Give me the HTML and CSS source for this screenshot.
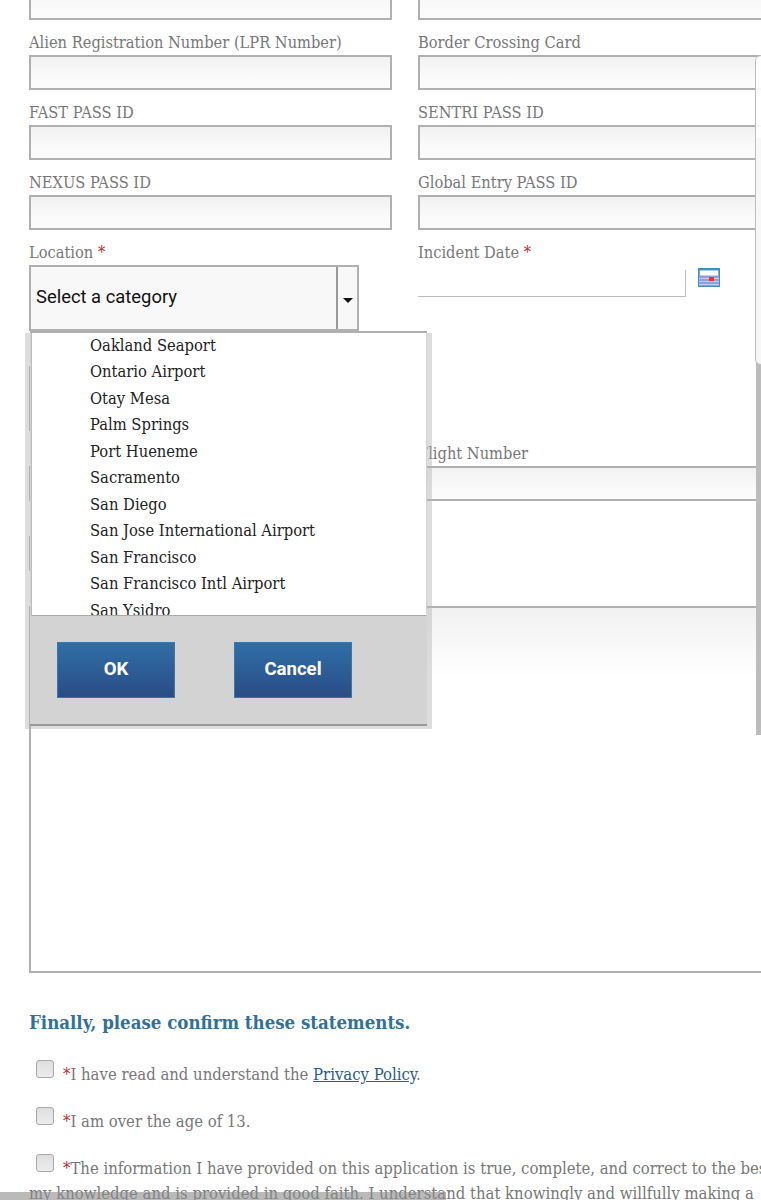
FILE: index.html
```html
<!DOCTYPE html>
<html lang="en">
<head>
<meta charset="utf-8">
<title>Application form</title>
<link rel="stylesheet" href="styles.css">
</head>
<body>
<div class="page">
  <form class="form">
    <div class="grid">
      <div class="field"><div class="input stub"></div></div>
      <div class="field"><div class="input stub"></div></div>
      <div class="field"><label class="label">Alien Registration Number (LPR Number)</label><div class="input"></div></div>
      <div class="field"><label class="label">Border Crossing Card</label><div class="input"></div></div>
      <div class="field"><label class="label">FAST PASS ID</label><div class="input"></div></div>
      <div class="field"><label class="label">SENTRI PASS ID</label><div class="input"></div></div>
      <div class="field"><label class="label">NEXUS PASS ID</label><div class="input"></div></div>
      <div class="field"><label class="label">Global Entry PASS ID</label><div class="input"></div></div>
      <div class="field">
        <label class="label">Location <span class="req">*</span></label>
        <div class="select"><span class="select-text">Select a category</span><span class="select-btn"><span class="caret"></span></span></div>
      </div>
      <div class="field">
        <label class="label">Incident Date <span class="req">*</span></label>
        <div class="date-row">
          <div class="date-input"></div>
          <svg class="cal" width="22" height="19" viewBox="0 0 22 19" aria-hidden="true">
            <rect x="0.5" y="0.5" width="21" height="18" fill="#8f9fdc" stroke="#3f8fc0"/>
            <rect x="1" y="1" width="20" height="1.5" fill="#3f8fc0"/>
            <rect x="2" y="2.5" width="18" height="5" fill="#fff"/>
            <path d="M1 10.5h20M1 13.5h20M1 16.5h20" stroke="#c3cbf0" stroke-width="1"/>
            <rect x="11" y="9" width="5" height="4" fill="#e8322a"/>
          </svg>
        </div>
      </div>
      <div class="field tall"><label class="label"></label><div class="input textish"></div></div>
      <div class="field tall"></div>
      <div class="field"><label class="label"></label><div class="input"></div></div>
      <div class="field"><label class="label">Flight Number</label><div class="input"></div></div>
      <div class="field"><label class="label"></label><div class="input"></div></div>
      <div class="field"></div>
      <div class="field wide"><label class="label"></label><div class="textarea"></div></div>
    </div>
    <h2 class="heading">Finally, please confirm these statements.</h2>
    <p class="statement"><input class="check" type="checkbox"><span class="req">*</span>I have read and understand the <a class="link" href="#">Privacy Policy</a>.</p>
    <p class="statement"><input class="check" type="checkbox"><span class="req">*</span>I am over the age of 13.</p>
    <p class="statement"><input class="check" type="checkbox"><span class="req">*</span>The information I have provided on this application is true, complete, and correct to the best of my knowledge and is provided in good faith. I understand that knowingly and willfully making a</p>
  </form>

  <div class="dialog-shadow"></div>
  <div class="dialog">
    <ul class="options">
      <li>Oakland Seaport</li>
      <li>Ontario Airport</li>
      <li>Otay Mesa</li>
      <li>Palm Springs</li>
      <li>Port Hueneme</li>
      <li>Sacramento</li>
      <li>San Diego</li>
      <li>San Jose International Airport</li>
      <li>San Francisco</li>
      <li>San Francisco Intl Airport</li>
      <li>San Ysidro</li>
    </ul>
    <div class="actions">
      <button class="btn" type="button">OK</button>
      <button class="btn" type="button">Cancel</button>
    </div>
  </div>

  <div class="v-scroll"></div>
  <div class="edge-panel"></div>
  <div class="h-scroll"></div>
</div>
</body>
</html>
```
FILE: styles.css
```css
html, body {
  margin: 0;
  padding: 0;
  background: #fff;
}
.page {
  position: relative;
  width: 761px;
  height: 1200px;
  overflow: hidden;
  font-family: "DejaVu Serif Condensed", "DejaVu Serif", serif;
  font-stretch: condensed;
  color: #777;
}
.form {
  width: 820px;
  padding-left: 29px;
}
.grid {
  display: grid;
  grid-template-columns: 363px 363px;
  column-gap: 26px;
}
.field {
  min-width: 0;
}
.wide {
  grid-column: 1 / span 2;
  width: 760px;
}
.tall {
  min-height: 99px;
}
.label {
  display: block;
  box-sizing: border-box;
  height: 35px;
  padding-top: 11px;
  line-height: 24px;
  font-size: 16.3px;
  white-space: nowrap;
}
.req {
  color: #c1272d;
}
.input {
  box-sizing: border-box;
  height: 35px;
  border: 2px solid #b0b0b0;
  background: linear-gradient(#f1f1f1, #fbfbfb 70%);
}
.stub {
  height: 20px;
  border-top: 0;
  background: linear-gradient(#f8f8f8, #fcfcfc);
}
.textish {
  height: 65px;
}
.select {
  box-sizing: border-box;
  display: flex;
  width: 330px;
  height: 66px;
  border: 2px solid #b0b0b0;
  background: #f8f8f8;
}
.select-text {
  flex: 1;
  padding-left: 5px;
  font: 18.4px/60px Roboto, sans-serif;
  color: #111;
}
.select-btn {
  display: flex;
  align-items: center;
  justify-content: center;
  width: 19px;
  border-left: 2px solid #999;
}
.caret {
  margin-top: 4px;
  border-left: 5px solid transparent;
  border-right: 5px solid transparent;
  border-top: 5px solid #111;
}
.date-row {
  display: flex;
  align-items: flex-start;
}
.date-input {
  box-sizing: border-box;
  width: 268px;
  height: 27px;
  margin-top: 5px;
  border-right: 1px solid #bbb;
  border-bottom: 1px solid #bbb;
}
.cal {
  margin: 3px 0 0 12px;
}
.textarea {
  box-sizing: border-box;
  height: 367px;
  border: 2px solid #b0b0b0;
  background: linear-gradient(#f1f1f1, #fff 70px);
}
.heading {
  margin: 39px 0 0;
  height: 22px;
  font-size: 18.5px;
  line-height: 22px;
  font-weight: 700;
  color: #336f9b;
  white-space: nowrap;
}
.statement {
  margin: 0 0 22px;
  font-size: 16.55px;
  line-height: 25px;
  width: 778px;
}
.heading + .statement {
  margin-top: 28px;
}
.check {
  appearance: none;
  box-sizing: border-box;
  width: 18px;
  height: 18px;
  margin: -10px 9px -10px 7px;
  vertical-align: 12px;
  border: 1.5px solid #a8a8a8;
  border-radius: 3px;
  background: linear-gradient(#dedede, #ececec);
}
.link {
  color: #285a8c;
}
.dialog-shadow {
  position: absolute;
  left: 25px;
  top: 333px;
  width: 407px;
  height: 396px;
  background: rgba(180, 180, 180, 0.45);
}
.dialog {
  position: absolute;
  left: 30px;
  top: 331px;
  box-sizing: border-box;
  width: 397px;
  height: 395px;
  display: flex;
  flex-direction: column;
  border-top: 2px solid #b0b0b0;
  border-bottom: 2px solid #999;
  background: #d3d3d3;
}
.options {
  box-sizing: border-box;
  height: 283px;
  margin: 0 1px 0 1px;
  padding: 0 0 0 58px;
  overflow: hidden;
  list-style: none;
  background: #fff;
  border-left: 1px solid #bbb;
  border-bottom: 1px solid #aaa;
  color: #222;
  font-size: 16.4px;
  line-height: 26.45px;
}
.actions {
  display: flex;
  gap: 59px;
  padding: 26px 0 0 27px;
}
.btn {
  box-sizing: border-box;
  width: 118px;
  height: 56px;
  padding: 0 0 2px;
  border: 1px solid #3a78a8;
  border-radius: 0;
  background: linear-gradient(#2f6fa6, #2b4c86);
  color: #fff;
  font: 700 18.6px Roboto, sans-serif;
}
.v-scroll {
  position: absolute;
  right: 0;
  top: 138px;
  width: 5px;
  height: 597px;
  background: #bcbcbc;
}
.edge-panel {
  position: absolute;
  left: 755px;
  top: 55px;
  box-sizing: border-box;
  width: 12px;
  height: 310px;
  border: 1px solid #bdbdbd;
  border-radius: 8px;
  background: rgba(255, 255, 255, 0.88);
}
.h-scroll {
  position: absolute;
  left: 0;
  bottom: 0;
  width: 446px;
  height: 8px;
  background: rgba(140, 140, 140, 0.6);
}
```
